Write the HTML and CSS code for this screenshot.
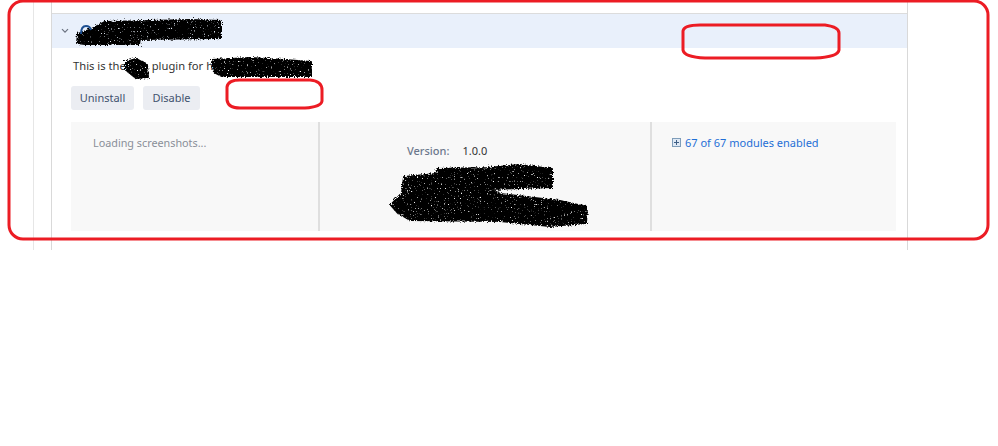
FILE: index.html
```html
<!DOCTYPE html>
<html lang="en">
<head>
<meta charset="utf-8">
<title>Plugin</title>
<link rel="stylesheet" href="styles.css">
</head>
<body>
<div class="page">
  <div class="outer">
    <section class="plugin">
      <header class="plugin-head">
        <svg class="chevron" width="8" height="6" viewBox="0 0 8 6"><path d="M1 1.2 4 4.2 7 1.2" fill="none" stroke="#6b7280" stroke-width="1.2"/></svg>
      </header>
      <p class="desc">This is the<span class="desc-gap"></span>plugin for h</p>
      <div class="actions">
        <button class="btn btn-uninstall">Uninstall</button>
        <button class="btn btn-disable">Disable</button>
      </div>
      <div class="details">
        <div class="col col-shots">Loading screenshots...</div>
        <div class="col col-meta">
          <div class="version"><span class="version-label">Version:</span><span class="version-value">1.0.0</span></div>
        </div>
        <div class="col col-modules">
          <svg class="plus" width="9" height="9" viewBox="0 0 9 9"><rect x="0.5" y="0.5" width="8" height="8" fill="#dfe9f5" stroke="#7f9db9"/><path d="M2 4.5H7M4.5 2V7" stroke="#3f5f85"/></svg>
          <a class="modules-link" href="#">67 of 67 modules enabled</a>
        </div>
      </div>
    </section>
  </div>
  <svg class="markup" width="998" height="446" viewBox="0 0 998 446">
    <defs>
      <filter id="rough" x="-5%" y="-20%" width="110%" height="140%">
        <feTurbulence type="fractalNoise" baseFrequency="0.7" numOctaves="2" seed="4" result="noise"/>
        <feDisplacementMap in="SourceGraphic" in2="noise" scale="5" result="shape"/>
        <feColorMatrix in="noise" type="matrix" values="0 0 0 0 0  0 0 0 0 0  0 0 0 0 0  6 0 0 0 -3.9" result="specks"/>
        <feComposite in="shape" in2="specks" operator="out"/>
      </filter>
    </defs>
    <g class="scribble" filter="url(#rough)">
      <path d="M77 43 L78 34 L92 29 L105 22 L150 21 L190 20 L221 21 L221 38 L140 39 L139 44 L85 44Z"/>
      <path d="M126 62 L136 59 L147 65 L148 77 L136 78 L126 70Z"/>
      <path d="M212 60 L250 58 L285 60 L311 62 L311 76 L222 76 L214 72Z"/>
      <path d="M404 177 L436 174 L437 169 L487 168 L520 165 L552 169 V187 L490 189 L500 194 L560 201 L587 207 L586 223 L550 226 L500 221 L410 220 L398 213 L391 205 L402 193Z"/>
    </g>
    <path class="logo-arc" d="M81 34 Q81 26 86 26 Q90 26 91 30"/>
    <g class="outlines">
      <rect class="outline-main" x="9" y="1" width="979" height="238" rx="14"/>
      <path class="outline-oval" d="M683 31 Q684 25 700 25 L825 25 Q839 27 839 33 V50 Q838 57 815 58 H705 Q684 57 683 50Z"/>
      <path class="outline-oval" d="M227 87 Q228 80 240 80 H310 Q322 81 322 90 V101 Q321 107 305 108 H240 Q228 108 227 100Z"/>
    </g>
  </svg>
</div>
</body>
</html>
```
FILE: styles.css
```css
* { box-sizing: border-box; }
html, body { margin: 0; padding: 0; background: #fff; }
body { font-family: "Noto Sans", "Open Sans", sans-serif; font-size: 10.8px; color: #333; }
.page { position: relative; width: 998px; height: 446px; overflow: hidden; }
.outer {
  margin-left: 33px;
  width: 875px;
  height: 250px;
  border-left: 1px solid #e6e6e6;
  padding-left: 17px;
}
.plugin {
  height: 250px;
  padding-top: 13px;
  border-left: 1px solid #d9d9d9;
  border-right: 1px solid #d9d9d9;
}
.plugin-head {
  height: 35px;
  background: #e9f0fb;
  border-top: 1px solid #dcdcdc;
  display: flex;
  align-items: center;
  padding-left: 9px;
}
.desc { margin: 0; padding: 10px 0 0 21px; height: 38px; line-height: 16px; font-size: 11.2px; color: #333; }
.desc-gap { display: inline-block; width: 26px; }
.actions { display: flex; gap: 9px; padding-left: 19px; }
.btn {
  height: 24px;
  border: 0;
  border-radius: 3px;
  background: #ebedf2;
  color: #42526e;
  font: 11px/24px "Noto Sans", "Open Sans", sans-serif;
  padding: 0;
}
.btn-uninstall { width: 63px; }
.btn-disable { width: 57px; }
.details {
  display: grid;
  grid-template-columns: 249px 332px 243px;
  height: 109px;
  margin: 12px 11px 0 19px;
  background: #f8f8f8;
}
.col { border-right: 2px solid #dfdfdf; }
.col:last-child { border-right: 0; }
.col-shots { padding: 13px 0 0 22px; line-height: 16px; color: #8a8f98; }
.col-meta { padding: 21px 0 0 87px; font-size: 11px; }
.version { display: flex; gap: 13px; line-height: 16px; }
.version-label { color: #6b778c; font-weight: 500; }
.version-value { color: #333; }
.col-modules { padding: 13px 0 0 20px; display: flex; align-items: flex-start; gap: 4px; line-height: 16px; font-size: 11px; }
.plus { margin-top: 3px; flex: none; }
.modules-link { color: #1f6fd6; text-decoration: none; }
.markup { position: absolute; left: 0; top: 0; pointer-events: none; }
.logo-arc { fill: none; stroke: #1d4f91; stroke-width: 2; }
.scribble { fill: #000; stroke: #000; stroke-width: 2; stroke-linejoin: round; }
.outlines { fill: none; stroke: #ec1c24; }
.outline-main { stroke-width: 3; }
.outline-oval { stroke-width: 3; }
```
